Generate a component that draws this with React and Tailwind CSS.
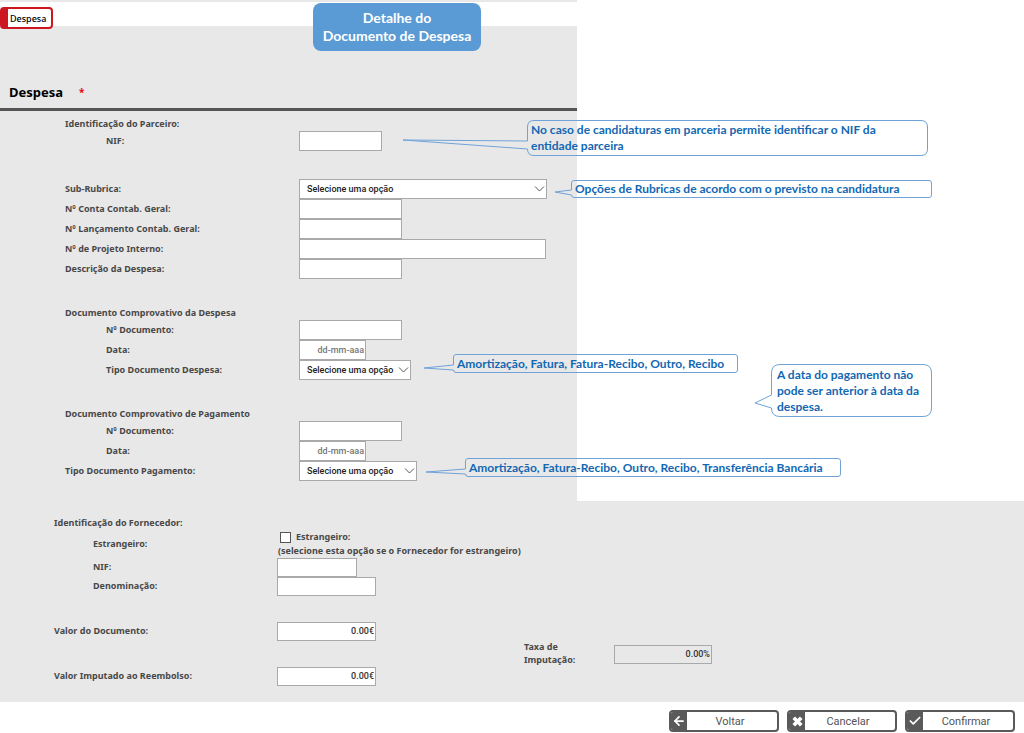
import { useState } from "react";
import { ArrowLeft, Check, X } from "lucide-react";

const initialForm = {
  nifParceiro: "",
  subRubrica: "",
  contaGeral: "",
  lancamentoGeral: "",
  projetoInterno: "",
  descricao: "",
  numDespesa: "",
  dataDespesa: "",
  tipoDespesa: "",
  numPagamento: "",
  dataPagamento: "",
  tipoPagamento: "",
  estrangeiro: false,
  nifFornecedor: "",
  denominacao: "",
  valorDocumento: "0.00€",
  valorImputado: "0.00€",
  taxa: "0.00%",
};

const tiposDespesa = ["Amortização", "Fatura", "Fatura-Recibo", "Outro", "Recibo"];
const tiposPagamento = [
  "Amortização",
  "Fatura-Recibo",
  "Outro",
  "Recibo",
  "Transferência Bancária",
];

function Row({ label, id, indent = "", compact = false, children }) {
  return (
    <div className={`flex ${compact ? "min-h-[19px]" : "min-h-5"}`}>
      <label
        htmlFor={id}
        className={`shrink-0 self-center pb-0.5 ${compact ? "w-[223px]" : "w-[234px]"} ${indent}`}
      >
        {label}
      </label>
      {children}
    </div>
  );
}

function TextInput({ className = "", ...props }) {
  return (
    <input
      type="text"
      className={`border border-[#a9a9a9] bg-white px-px font-['Roboto',sans-serif] text-[9px] font-medium text-[#333] outline-none placeholder:text-[#777] focus:border-[#5b9bd5] ${className}`}
      {...props}
    />
  );
}

function Select({ className = "", options = [], ...props }) {
  return (
    <div className={`relative h-5 ${className}`}>
      <select
        className="h-full w-full appearance-none border border-[#a9a9a9] bg-white pl-[7px] font-['Roboto',sans-serif] text-[9px] font-medium text-[#222] outline-none"
        {...props}
      >
        <option value="">Selecione uma opção</option>
        {options.map((item) => (
          <option key={item} value={item}>
            {item}
          </option>
        ))}
      </select>
      <svg
        className="pointer-events-none absolute top-1.5 right-0.5"
        width="11"
        height="8"
        viewBox="0 0 11 8"
        fill="none"
        stroke="#555"
      >
        <path d="M1 1.5 5.5 6 10 1.5" />
      </svg>
    </div>
  );
}

// Speech bubble: the tip is relative to the box's top left corner
function Callout({ position, size, w, h, r, tip, gap, children }) {
  const outline = `M${r} .5H${w - r}Q${w - 0.5} .5 ${w - 0.5} ${r}V${h - r}Q${w - 0.5} ${h - 0.5} ${w - r} ${h - 0.5}H${r}Q.5 ${h - 0.5} .5 ${Math.max(h - r, gap[1])}V${gap[1]}L${tip[0]} ${tip[1]}L.5 ${gap[0]}V${r}Q.5 .5 ${r} .5Z`;

  return (
    <div
      className={`absolute flex items-center font-['Lato',sans-serif] text-xs leading-4 font-bold text-[#1268b3] ${position} ${size}`}
    >
      <svg className="absolute inset-0 overflow-visible" width={w} height={h} fill="none" stroke="#6fa3d8">
        <path d={outline} />
      </svg>
      <p className="relative whitespace-nowrap">{children}</p>
    </div>
  );
}

function ActionButton({ icon, children }) {
  return (
    <button
      type="button"
      className="flex h-[22px] w-[110px] overflow-hidden rounded-sm border-2 border-[#5a5a5a] bg-white"
    >
      <span className="flex h-full w-4 shrink-0 items-center justify-center bg-[#5a5a5a] text-white">
        {icon}
      </span>
      <span className="flex h-full flex-1 items-center justify-center pr-1 font-['Roboto',sans-serif] text-[11px] font-normal text-[#555]">
        {children}
      </span>
    </button>
  );
}

export default function App() {
  const [form, setForm] = useState(initialForm);

  const handleChange = (e) => {
    const { name, type, checked, value } = e.target;
    setForm({ ...form, [name]: type === "checkbox" ? checked : value });
  };

  const bind = (name) => ({
    id: name,
    name,
    value: form[name],
    onChange: handleChange,
  });

  return (
    <div className="relative bg-white font-['Noto_Sans',sans-serif] text-[9px] leading-[13px] font-bold text-[#484848]">
      <form>
        <div className="w-[577px]">
          <div className="h-[26px] border-t-2 border-[#e8e8e8] pt-[5px]">
            <a
              href="#despesa"
              className="relative flex h-[22px] w-[53px] items-center rounded-sm border-2 border-l-8 border-[#cc1620] bg-white pl-0.5 font-medium text-black"
            >
              Despesa
            </a>
          </div>

          <div id="despesa" className="bg-[#e8e8e8]">
            <div className="flex h-[85px] items-end gap-4 border-b-[3px] border-[#555] pb-1.5 pl-[9px]">
              <h1 className="text-[13px] leading-5 text-black">Despesa</h1>
              <span className="text-[10px] leading-5 text-red-600">*</span>
            </div>

            <div className="flex flex-col gap-[25px] pt-1 pb-5 pl-[65px]">
              <div>
                <h2 className="h-4 leading-[18px]">Identificação do Parceiro:</h2>
                <Row label="NIF:" id="nifParceiro" indent="pl-[41px]">
                  <TextInput className="w-[83px]" {...bind("nifParceiro")} />
                </Row>
              </div>

              <div className="pt-[3px]">
                <Row label="Sub-Rubrica:" id="subRubrica">
                  <Select className="w-[248px]" {...bind("subRubrica")} />
                </Row>
                <Row label="Nº Conta Contab. Geral:" id="contaGeral">
                  <TextInput className="w-[103px]" {...bind("contaGeral")} />
                </Row>
                <Row label="Nº Lançamento Contab. Geral:" id="lancamentoGeral">
                  <TextInput className="w-[103px]" {...bind("lancamentoGeral")} />
                </Row>
                <Row label="Nº de Projeto Interno:" id="projetoInterno">
                  <TextInput className="w-[247px]" {...bind("projetoInterno")} />
                </Row>
                <Row label="Descrição da Despesa:" id="descricao">
                  <TextInput className="w-[103px]" {...bind("descricao")} />
                </Row>
              </div>

              <div>
                <h2 className="h-4 leading-[18px]">Documento Comprovativo da Despesa</h2>
                <Row label="Nº Documento:" id="numDespesa" indent="pl-[41px]">
                  <TextInput className="w-[103px]" {...bind("numDespesa")} />
                </Row>
                <Row label="Data:" id="dataDespesa" indent="pl-[41px]">
                  <TextInput
                    className="w-[67px] text-right"
                    placeholder="dd-mm-aaa"
                    {...bind("dataDespesa")}
                  />
                </Row>
                <Row label="Tipo Documento Despesa:" id="tipoDespesa" indent="pl-[41px]">
                  <Select
                    className="w-[112px]"
                    options={tiposDespesa}
                    {...bind("tipoDespesa")}
                  />
                </Row>
              </div>

              <div>
                <h2 className="h-4 leading-[18px]">Documento Comprovativo de Pagamento</h2>
                <Row label="Nº Documento:" id="numPagamento" indent="pl-[41px]">
                  <TextInput className="w-[103px]" {...bind("numPagamento")} />
                </Row>
                <Row label="Data:" id="dataPagamento" indent="pl-[41px]">
                  <TextInput
                    className="w-[67px] text-right"
                    placeholder="dd-mm-aaa"
                    {...bind("dataPagamento")}
                  />
                </Row>
                <Row label="Tipo Documento Pagamento:" id="tipoPagamento">
                  <Select
                    className="w-[118px]"
                    options={tiposPagamento}
                    {...bind("tipoPagamento")}
                  />
                </Row>
              </div>
            </div>
          </div>
        </div>

        <div className="bg-[#e8e8e8] pt-[13px] pb-4 pl-[54px]">
          <h2 className="h-4 leading-[18px]">Identificação do Fornecedor:</h2>
          <div className="flex h-7 items-center">
            <span className="w-[224px] shrink-0 pb-0.5 pl-[39px]">Estrangeiro:</span>
            <div className="leading-[14px]">
              <label className="flex h-3.5 items-center gap-[5px] pl-0.5">
                <input
                  type="checkbox"
                  name="estrangeiro"
                  checked={form.estrangeiro}
                  onChange={handleChange}
                  className="h-[11px] w-[11px] appearance-none border border-[#555] bg-white checked:bg-[#5a5a5a]"
                />
                Estrangeiro:
              </label>
              <p>(selecione esta opção se o Fornecedor for estrangeiro)</p>
            </div>
          </div>
          <Row label="NIF:" id="nifFornecedor" indent="pl-[39px]" compact>
            <TextInput className="w-20" {...bind("nifFornecedor")} />
          </Row>
          <Row label="Denominação:" id="denominacao" indent="pl-[39px]" compact>
            <TextInput className="w-[99px]" {...bind("denominacao")} />
          </Row>

          <div className="mt-[26px] flex items-center gap-[148px]">
            <div className="flex flex-col gap-[26px]">
              <Row label="Valor do Documento:" id="valorDocumento" compact>
                <TextInput className="w-[99px] text-right" {...bind("valorDocumento")} />
              </Row>
              <Row label="Valor Imputado ao Reembolso:" id="valorImputado" compact>
                <TextInput className="w-[99px] text-right" {...bind("valorImputado")} />
              </Row>
            </div>
            <div className="flex items-center">
              <label htmlFor="taxa" className="w-[90px] pb-0.5">
                Taxa de
                <br />
                Imputação:
              </label>
              <input
                id="taxa"
                type="text"
                readOnly
                value={form.taxa}
                className="h-[19px] w-[98px] border border-[#a9a9a9] bg-transparent px-px text-right font-['Roboto',sans-serif] text-[9px] font-medium text-[#333]"
              />
            </div>
          </div>
        </div>

        <div className="flex justify-end gap-2 pt-2 pr-[9px] pb-px">
          <ActionButton icon={<ArrowLeft size={14} strokeWidth={3} />}>Voltar</ActionButton>
          <ActionButton icon={<X size={15} strokeWidth={6} strokeLinecap="butt" />}>
            Cancelar
          </ActionButton>
          <ActionButton icon={<Check size={14} strokeWidth={3} />}>Confirmar</ActionButton>
        </div>
      </form>

      <div className="absolute top-[3px] left-[313px] flex h-12 w-[168px] items-center justify-center rounded-lg bg-[#5b9bd5] text-center font-['Lato',sans-serif] text-sm leading-[18px] text-white">
        <p>
          Detalhe do
          <br />
          Documento de Despesa
        </p>
      </div>

      <Callout
        position="top-[120px] left-[527px]"
        size="h-9 w-[401px] pl-1"
        w={401}
        h={36}
        r={7}
        tip={[-124, 20]}
        gap={[21, 29]}
      >
        No caso de candidaturas em parceria permite identificar o NIF da
        <br />
        entidade parceira
      </Callout>
      <Callout
        position="top-[180px] left-[571px]"
        size="h-[18px] w-[361px] pl-1"
        w={361}
        h={18}
        r={3}
        tip={[-16, 12]}
        gap={[10, 15]}
      >
        Opções de Rubricas de acordo com o previsto na candidatura
      </Callout>
      <Callout
        position="top-[354px] left-[453px]"
        size="h-[19px] w-[285px] pl-1"
        w={285}
        h={19}
        r={3}
        tip={[-29, 14]}
        gap={[11, 16]}
      >
        Amortização, Fatura, Fatura-Recibo, Outro, Recibo
      </Callout>
      <Callout
        position="top-[364px] left-[771px]"
        size="h-[53px] w-[161px] pl-1.5"
        w={161}
        h={53}
        r={9}
        tip={[-16, 39]}
        gap={[31, 44]}
      >
        A data do pagamento não
        <br />
        pode ser anterior à data da
        <br />
        despesa.
      </Callout>
      <Callout
        position="top-[458px] left-[465px]"
        size="h-[19px] w-[376px] pl-1"
        w={376}
        h={19}
        r={3}
        tip={[-39, 14]}
        gap={[11, 16]}
      >
        Amortização, Fatura-Recibo, Outro, Recibo, Transferência Bancária
      </Callout>
    </div>
  );
}
